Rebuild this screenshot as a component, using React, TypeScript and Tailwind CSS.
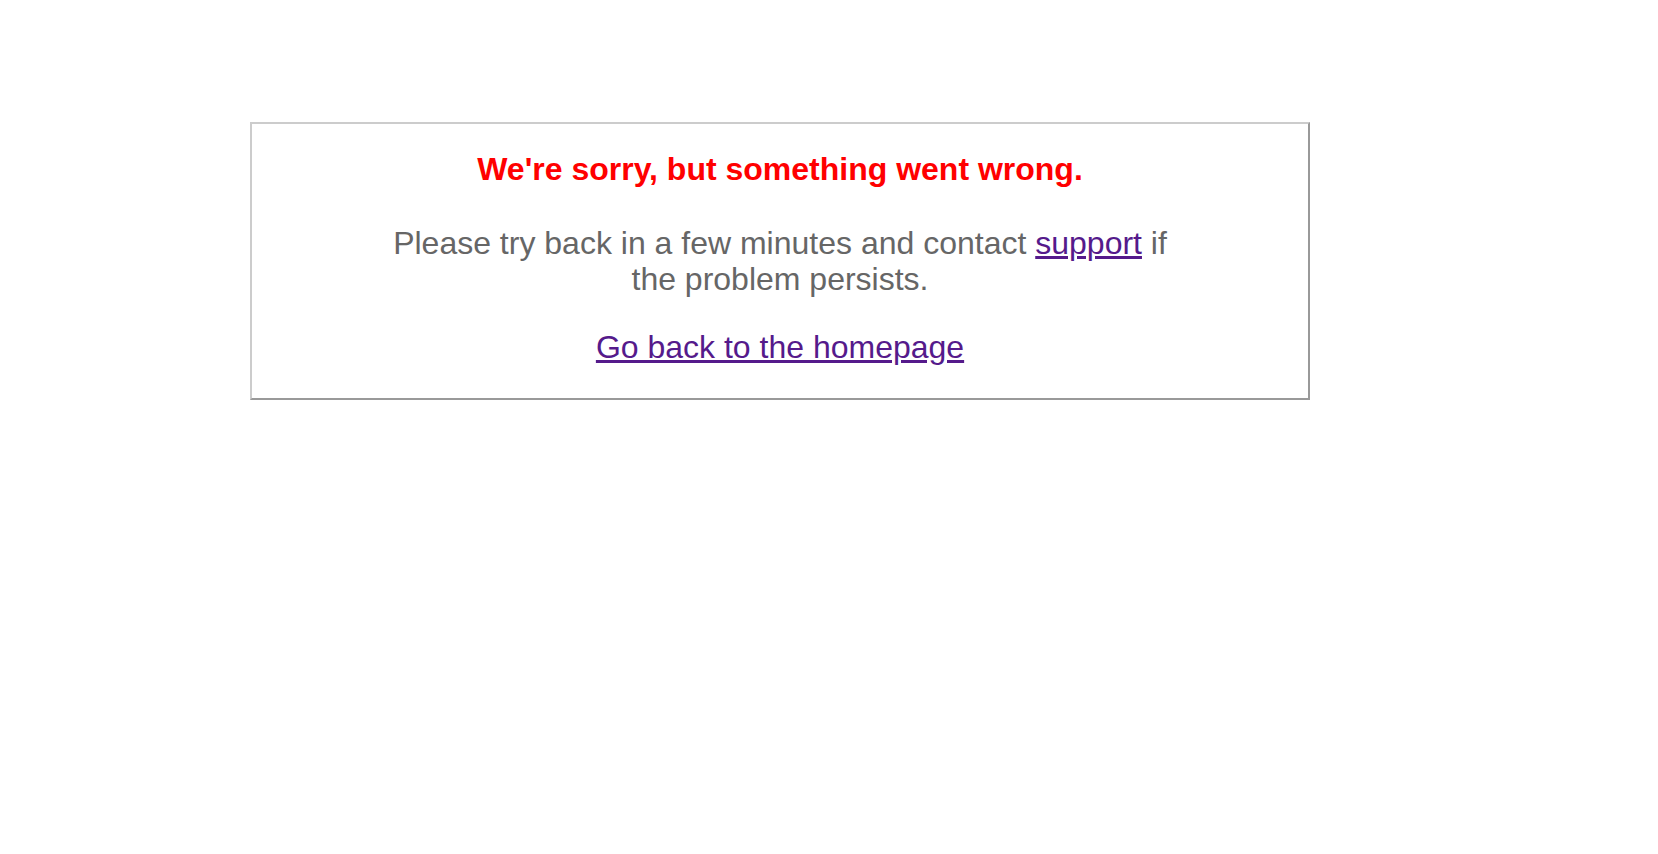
const App = () => {
  return (
    <div className="min-h-screen bg-white pt-[122px] pl-[250px] font-['Liberation_Sans',Arial,sans-serif]">
      <div className="w-[1060px] border-2 border-t-[#cccccc] border-l-[#cccccc] border-r-[#999999] border-b-[#999999] pt-[27px] pb-[33px] text-center">
        <h1 className="text-[32px] leading-[36px] font-bold text-[#ff0000]">
          We're sorry, but something went wrong.
        </h1>
        <p className="mx-auto mt-[38px] max-w-[800px] text-[32px] leading-[36px] text-[#666666]">
          Please try back in a few minutes and contact{" "}
          <a href="#" className="text-[#551a8b] underline">
            support
          </a>{" "}
          if the problem persists.
        </p>
        <p className="mt-[32px] text-[32px] leading-[36px]">
          <a href="#" className="text-[#551a8b] underline">
            Go back to the homepage
          </a>
        </p>
      </div>
    </div>
  );
};

export default App;
